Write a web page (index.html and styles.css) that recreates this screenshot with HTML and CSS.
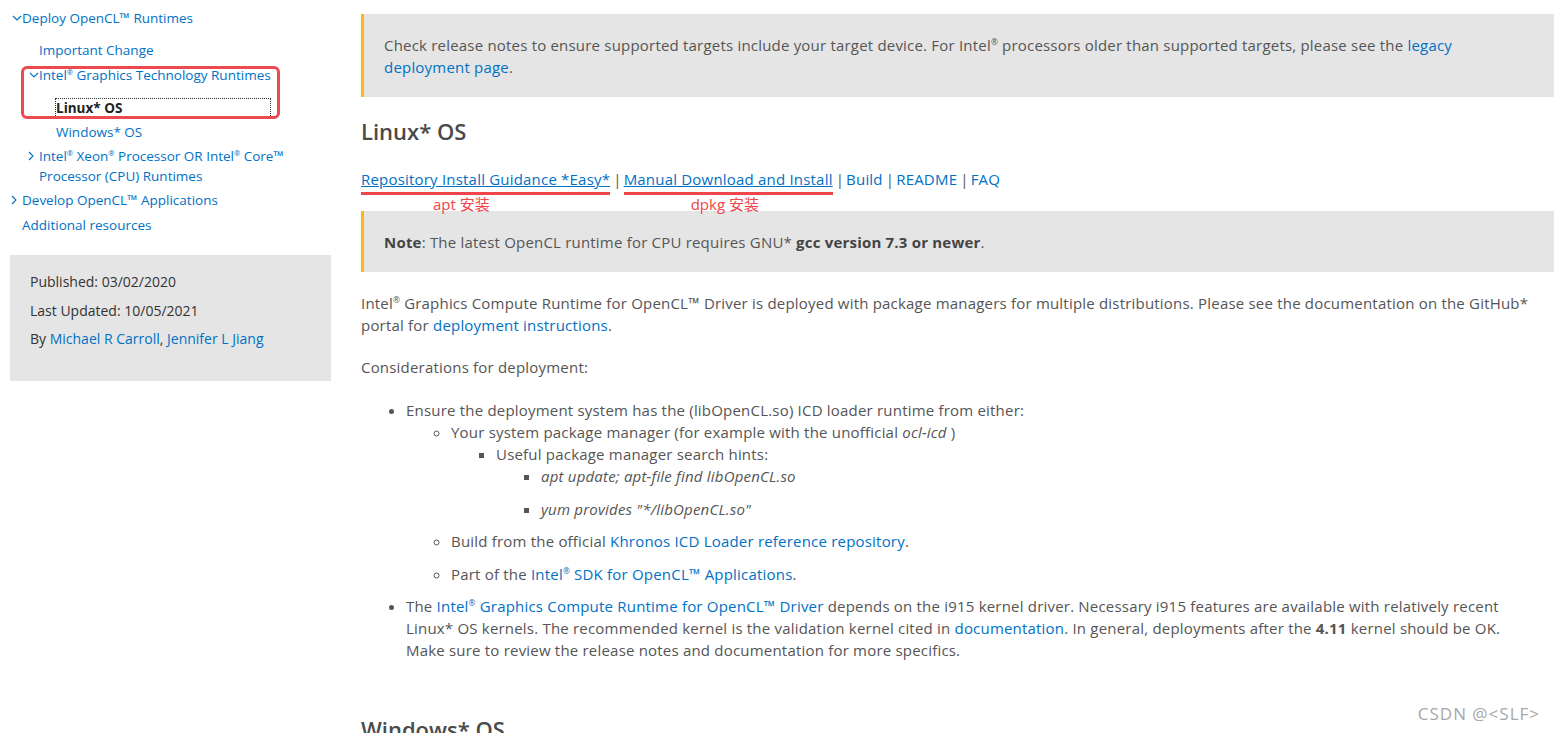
FILE: index.html
```html
<!DOCTYPE html>
<html lang="en">
<head>
  <meta charset="UTF-8">
  <title>OpenCL Runtimes for Intel Processors</title>
  <link rel="stylesheet" href="styles.css">
</head>
<body>
<div class="page">
  <aside class="sidebar">
    <nav class="toc">
      <ul>
        <li class="open">
          <a href="#"><svg class="chev" viewBox="0 0 10 10"><polyline points="1,3 5,7 9,3"/></svg>Deploy OpenCL™ Runtimes</a>
          <ul>
            <li><a href="#">Important Change</a></li>
            <li class="open">
              <a href="#"><svg class="chev" viewBox="0 0 10 10"><polyline points="1,3 5,7 9,3"/></svg>Intel<sup>®</sup> Graphics Technology Runtimes</a>
              <ul class="os">
                <li><a href="#" class="current">Linux* OS</a></li>
                <li><a href="#">Windows* OS</a></li>
              </ul>
            </li>
            <li class="after-os"><a href="#"><svg class="chev right" viewBox="0 0 10 10"><polyline points="3,1 7,5 3,9"/></svg>Intel<sup>®</sup> Xeon<sup>®</sup> Processor OR Intel<sup>®</sup> Core™ Processor (CPU) Runtimes</a></li>
          </ul>
        </li>
        <li class="tight"><a href="#"><svg class="chev right" viewBox="0 0 10 10"><polyline points="3,1 7,5 3,9"/></svg>Develop OpenCL™ Applications</a></li>
        <li><a href="#">Additional resources</a></li>
      </ul>
      <div class="mark-box"></div>
    </nav>
    <div class="meta">
      <p>Published: 03/02/2020</p>
      <p>Last Updated: 10/05/2021</p>
      <p>By <a href="#">Michael R Carroll</a>, <a href="#">Jennifer L Jiang</a></p>
    </div>
  </aside>

  <main class="content">
    <div class="note">
      Check release notes to ensure supported targets include your target device. For Intel<sup>®</sup> processors older than supported targets, please see the <a href="#">legacy deployment page</a>.
    </div>

    <h2>Linux* OS</h2>
    <p class="links">
      <a href="#" class="u marked">Repository Install Guidance *Easy*<span class="mark-label apt">apt 安装</span></a><span class="sep">|</span><a href="#" class="u marked">Manual Download and Install<span class="mark-label dpkg">dpkg 安装</span></a><span class="sep">|</span><a href="#">Build</a><span class="sep">|</span><a href="#">README</a><span class="sep">|</span><a href="#">FAQ</a>
    </p>

    <div class="note">
      <b>Note</b>: The latest OpenCL runtime for CPU requires GNU* <b>gcc version 7.3 or newer</b>.
    </div>

    <p>Intel<sup>®</sup> Graphics Compute Runtime for OpenCL™ Driver is deployed with package managers for multiple distributions. Please see the documentation on the GitHub* portal for <a href="#">deployment instructions</a>.</p>

    <p>Considerations for deployment:</p>

    <ul class="list">
      <li>Ensure the deployment system has the (libOpenCL.so) ICD loader runtime from either:
        <ul>
          <li>Your system package manager (for example with the unofficial <i>ocl-icd</i> )
            <ul>
              <li>Useful package manager search hints:
                <ul>
                  <li><i>apt update; apt-file find libOpenCL.so</i></li>
                  <li><i>yum provides "*/libOpenCL.so"</i></li>
                </ul>
              </li>
            </ul>
          </li>
          <li>Build from the official <a href="#">Khronos ICD Loader reference repository</a>.</li>
          <li>Part of the <a href="#">Intel<sup>®</sup> SDK for OpenCL™ Applications</a>.</li>
        </ul>
      </li>
      <li>The <a href="#">Intel<sup>®</sup> Graphics Compute Runtime for OpenCL™ Driver</a> depends on the i915 kernel driver. Necessary i915 features are available with relatively recent Linux* OS kernels. The recommended kernel is the validation kernel cited in <a href="#">documentation</a>. In general, deployments after the <b>4.11</b> kernel should be OK. Make sure to review the release notes and documentation for more specifics.</li>
    </ul>

    <h2 class="next">Windows* OS</h2>
  </main>
</div>
<div class="watermark">CSDN @&lt;SLF&gt;</div>
</body>
</html>
```

FILE: styles.css
```css
body {
  margin: 0;
  font-family: "Open Sans", Arial, sans-serif;
  color: #555;
  background: #fff;
  overflow: hidden;
  height: 733px;
}
a {
  color: #0071c5;
  text-decoration: none;
}
sup {
  font-size: 55%;
  line-height: 0;
  vertical-align: 0.7em;
}

.page {
  display: flex;
  align-items: flex-start;
}

/* sidebar */
.sidebar {
  width: 321px;
  flex: none;
  padding: 8px 0 0 10px;
}
.toc {
  position: relative;
  font-size: 13.5px;
}
.toc ul {
  list-style: none;
  margin: 0;
  padding: 0 0 0 17px;
}
.toc > ul {
  padding-left: 2px;
}
.toc li + li {
  margin-top: 5px;
}
.toc li > ul {
  margin-top: 12px;
}
.toc li > ul.os {
  margin-top: 14px;
}
.toc li.after-os {
  margin-top: 4px;
}
.toc li.tight {
  margin-top: 4px;
}
.toc a {
  position: relative;
  display: block;
  padding-left: 10px;
  line-height: 20px;
  width: 262px;
}
.toc .chev {
  position: absolute;
  left: 0;
  top: 5px;
  width: 10px;
  height: 10px;
  fill: none;
  stroke: #0071c5;
  stroke-width: 1.1;
}
.toc .chev.right {
  left: -3px;
}
.toc .current {
  color: #222;
  font-weight: 700;
  outline: 1px dotted #333;
  width: 214px;
  padding-left: 0;
  margin-left: 10px;
  line-height: 18px;
  margin-top: 1px;
  margin-bottom: 1px;
}
.mark-box {
  position: absolute;
  left: 11px;
  top: 58px;
  width: 253px;
  height: 47px;
  border: 3px solid #ec4a4f;
  border-radius: 6px;
}
.meta {
  margin-top: 20px;
  background: #e5e5e5;
  padding: 13px 20px 27px;
  font-size: 14px;
  color: #333;
}
.meta p {
  margin: 0;
  line-height: 28.5px;
}

/* main column */
.content {
  flex: 1;
  margin-left: 30px;
  font-size: 15px;
  letter-spacing: 0.2px;
  line-height: 22px;
}
.content p {
  margin: 20px 0;
  max-width: 1180px;
}
.note {
  margin-top: 14px;
  background: #e5e5e5;
  border-left: 3px solid #fdb813;
  padding: 20px 30px 19px 20px;
}
.note b { color: #444; }
.content h2 {
  margin: 19px 0 22px 0;
  font-size: 22px;
  line-height: 30px;
  font-weight: 600;
  letter-spacing: 0;
  color: #4a4a4a;
}
.content h2.next {
  margin-top: 53px;
}
.content p.links {
  margin-bottom: 21px;
}
.links .sep {
  margin: 0 2px 0 3px;
}
.links a.u {
  text-decoration: underline;
}
.marked {
  position: relative;
}
.marked::after {
  content: "";
  position: absolute;
  left: 0;
  right: 0;
  top: 23px;
  height: 3px;
  background: #f0454a;
}
.mark-label {
  position: absolute;
  top: 25px;
  font-size: 15px;
  line-height: 20px;
  letter-spacing: 0;
  color: #f0454a;
  white-space: nowrap;
  font-family: "Open Sans", "Noto Sans CJK SC", sans-serif;
}
.mark-label.apt { left: 72px; }
.mark-label.dpkg { left: 67px; }

.list {
  margin: 21px 0 0 0;
  padding-left: 45px;
  max-width: 1114px;
}
.list ul {
  margin: 0;
  padding-left: 45px;
}
.list li {
  margin-bottom: 10.5px;
}
.list ul ul ul {
  list-style: square;
}

.watermark {
  position: absolute;
  right: 14px;
  top: 702px;
  font-size: 17px;
  letter-spacing: 1px;
  color: #a8a8a8;
  font-family: "Open Sans", sans-serif;
}
```
